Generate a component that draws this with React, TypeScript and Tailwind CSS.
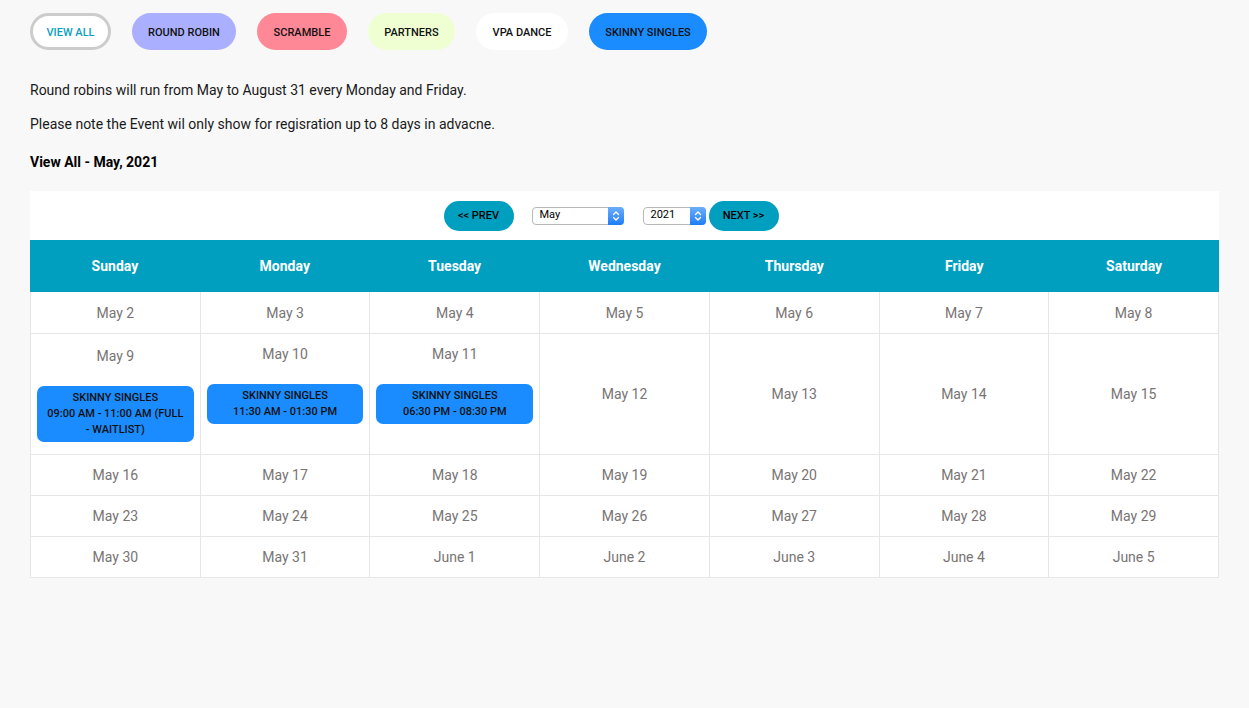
import React from 'react';

type Ev = { title: string; time: string };
type Cell = { label: string; events?: Ev[]; pad?: string };

const filters = [
  { name: 'VIEW ALL', cls: 'bg-white border-[3px] border-[#cccccc] text-[#0a9fbf] w-[81px]' },
  { name: 'ROUND ROBIN', cls: 'bg-[#aab0ff] text-[#111] w-[104px]' },
  { name: 'SCRAMBLE', cls: 'bg-[#ff8896] text-[#111] w-[90px]' },
  { name: 'PARTNERS', cls: 'bg-[#efffd2] text-[#111] w-[87px]' },
  { name: 'VPA DANCE', cls: 'bg-white text-[#111] w-[92px]' },
  { name: 'SKINNY SINGLES', cls: 'bg-[#1a8cff] text-[#111] w-[118px]' },
];

const days = ['Sunday', 'Monday', 'Tuesday', 'Wednesday', 'Thursday', 'Friday', 'Saturday'];

const weeks: Cell[][] = [
  [2, 3, 4, 5, 6, 7, 8].map((d) => ({ label: `May ${d}` })),
  [
    { label: 'May 9', pad: 'pt-[12px]', events: [{ title: 'SKINNY SINGLES', time: '09:00 AM - 11:00 AM (FULL - WAITLIST)' }] },
    { label: 'May 10', pad: 'pt-[10px]', events: [{ title: 'SKINNY SINGLES', time: '11:30 AM - 01:30 PM' }] },
    { label: 'May 11', pad: 'pt-[10px]', events: [{ title: 'SKINNY SINGLES', time: '06:30 PM - 08:30 PM' }] },
    { label: 'May 12' },
    { label: 'May 13' },
    { label: 'May 14' },
    { label: 'May 15' },
  ],
  [16, 17, 18, 19, 20, 21, 22].map((d) => ({ label: `May ${d}` })),
  [23, 24, 25, 26, 27, 28, 29].map((d) => ({ label: `May ${d}` })),
  [
    { label: 'May 30' },
    { label: 'May 31' },
    { label: 'June 1' },
    { label: 'June 2' },
    { label: 'June 3' },
    { label: 'June 4' },
    { label: 'June 5' },
  ],
];

const SelectBox = ({ value, width }: { value: string; width: string }) => (
  <div className={`relative flex items-center h-[18px] ${width} bg-white border border-[#b8b8b8] rounded-[4px] text-[11px] text-black pl-[7px]`}>
    {value}
    <div className="absolute right-[-1px] top-[-1px] h-[18px] w-[16px] rounded-r-[4px] bg-gradient-to-b from-[#6aaefc] to-[#1b7cf5] flex items-center justify-center">
      <svg width="8" height="12" viewBox="0 0 8 12" fill="none" stroke="white" strokeWidth="1.4" strokeLinecap="round" strokeLinejoin="round">
        <path d="M1.5 4.5 L4 2 L6.5 4.5" />
        <path d="M1.5 7.5 L4 10 L6.5 7.5" />
      </svg>
    </div>
  </div>
);

const App = () => {
  return (
    <div className="min-h-[708px] bg-[#f8f8f8] px-[30px] pt-[13px] text-[14px] text-[#1a1a1a]" style={{ fontFamily: 'Roboto, "Liberation Sans", sans-serif' }}>
      {/* Filter pills */}
      <div className="flex gap-[21px]">
        {filters.map((f) => (
          <button
            key={f.name}
            className={`h-[37px] rounded-full flex items-center justify-center pt-[4px] text-[11px] font-medium ${f.cls}`}
          >
            {f.name}
          </button>
        ))}
      </div>

      <p className="mt-[30px] leading-[20px]">Round robins will run from May to August 31 every Monday and Friday.</p>
      <p className="mt-[14px] leading-[20px]">Please note the Event wil only show for regisration up to 8 days in advacne.</p>
      <p className="mt-[18px] leading-[20px] font-bold text-black">View All - May, 2021</p>

      {/* Calendar */}
      <div className="mt-[19px] bg-white">
        <div className="h-[49px] flex items-center justify-center pr-[27px]">
          <button className="h-[30px] w-[70px] rounded-full bg-[#009fbf] pt-[2px] text-[11px] font-medium text-black mr-[18px]">
            &lt;&lt; PREV
          </button>
          <div className="mr-[19px]">
            <SelectBox value="May" width="w-[92px]" />
          </div>
          <div className="mr-[3px]">
            <SelectBox value="2021" width="w-[63px]" />
          </div>
          <button className="h-[30px] w-[70px] rounded-full bg-[#009fbf] pt-[2px] text-[11px] font-medium text-black">
            NEXT &gt;&gt;
          </button>
        </div>

        <div className="grid grid-cols-7 h-[52px] bg-[#009fbf]">
          {days.map((d) => (
            <div key={d} className="flex items-center justify-center text-white font-bold text-[14px]">
              {d}
            </div>
          ))}
        </div>

        <div className="border-l border-[#e6e6e6]">
          {weeks.map((week, wi) => (
            <div key={wi} className="grid grid-cols-7">
              {week.map((c) => (
                <div
                  key={c.label}
                  className={`border-r border-b border-[#e6e6e6] flex flex-col items-center ${
                    c.events
                      ? `${c.pad} pb-[12px] px-[6px]`
                      : `justify-center ${wi === 0 ? 'min-h-[42px] pt-[1px]' : 'min-h-[41px]'}`
                  }`}
                >
                  <div className="leading-[20px] text-[#787474] text-[14px]">{c.label}</div>
                  {c.events?.map((e, i) => (
                    <div
                      key={i}
                      className="mt-[20px] w-full rounded-[7px] bg-[#1a8cff] px-[8px] py-[4px] text-center text-[11px] leading-[16px] font-medium text-[#111]"
                    >
                      <div>{e.title}</div>
                      <div>{e.time}</div>
                    </div>
                  ))}
                </div>
              ))}
            </div>
          ))}
        </div>
      </div>
    </div>
  );
};

export default App;
